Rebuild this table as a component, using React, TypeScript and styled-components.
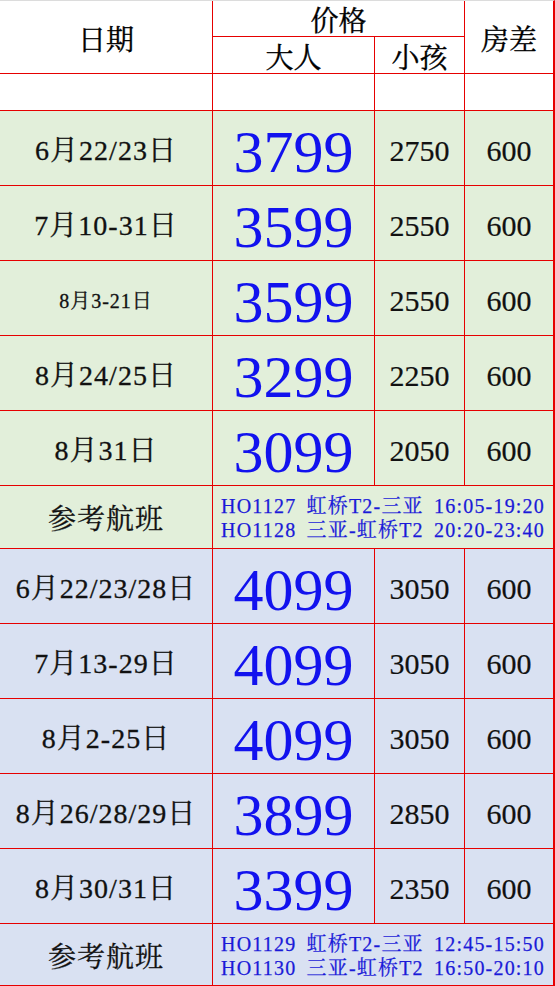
import React from "react";
import styled, { createGlobalStyle } from "styled-components";

const Global = createGlobalStyle`
  html, body { margin: 0; padding: 0; background: #ffffff; }
  body { width: 555px; overflow: hidden; }
`;

const RED = "#e60000";
const GREEN = "#e2efda";
const BLUE = "#d9e1f2";
const SERIF = `"Liberation Serif", "Noto Serif CJK SC", "Noto Sans CJK SC", serif`;

const Sheet = styled.div`
  display: grid;
  width: 555px;
  height: 986px;
  box-sizing: border-box;
  border-top: 1px solid #dcdcdc;
  border-right: 2px solid ${RED};
  border-bottom: 2px solid ${RED};
  grid-template-columns: 213px 162px 90px 88px;
  grid-template-rows: 36px 37px 37px repeat(5, 75px) 63px repeat(5, 75px) 61px;
  font-family: ${SERIF};
  color: #111;
`;

type CellProps = {
  $bg?: string;
  $col?: string;
  $row?: string;
  $noRight?: boolean;
  $noBottom?: boolean;
};

const Cell = styled.div<CellProps>`
  box-sizing: border-box;
  display: flex;
  align-items: center;
  justify-content: center;
  background: ${(p) => p.$bg || "#ffffff"};
  border-right: ${(p) => (p.$noRight ? "none" : `1px solid ${RED}`)};
  border-bottom: ${(p) => (p.$noBottom ? "none" : `1px solid ${RED}`)};
  grid-column: ${(p) => p.$col || "auto"};
  grid-row: ${(p) => p.$row || "auto"};
  line-height: 1;
  white-space: nowrap;
  overflow: hidden;
`;

const HeadText = styled.span<{ $dy?: number }>`
  font-size: 28px;
  color: #000;
  -webkit-text-stroke: 0.35px #000;
  position: relative;
  top: ${(p) => p.$dy || 0}px;
`;

const DateText = styled.span<{ $size?: number }>`
  font-size: ${(p) => p.$size || 28}px;
  letter-spacing: 1px;
  color: #111;
  -webkit-text-stroke: 0.3px #111;
  position: relative;
  top: 3px;
`;

const BigPrice = styled.span`
  font-size: 60px;
  color: #1212ee;
  position: relative;
  top: 4px;
`;

const SmallPrice = styled.span`
  font-size: 30px;
  color: #111;
  -webkit-text-stroke: 0.2px #111;
  position: relative;
  top: 3px;
`;

const FlightCell = styled(Cell)`
  flex-direction: column;
  align-items: flex-start;
  justify-content: center;
  padding-left: 8px;
  padding-top: 3px;
  gap: 3px;
`;

const FlightLine = styled.div`
  font-family: ${SERIF};
  font-size: 20px;
  line-height: 21px;
  letter-spacing: 1.2px;
  word-spacing: 4px;
  color: #1a1ad8;
  -webkit-text-stroke: 0.25px #1a1ad8;
`;

type Row = { date: string; dateSize?: number; adult: string; child: string; room: string };

const greenRows: Row[] = [
  { date: "6月22/23日", adult: "3799", child: "2750", room: "600" },
  { date: "7月10-31日", adult: "3599", child: "2550", room: "600" },
  { date: "8月3-21日", dateSize: 20, adult: "3599", child: "2550", room: "600" },
  { date: "8月24/25日", adult: "3299", child: "2250", room: "600" },
  { date: "8月31日", adult: "3099", child: "2050", room: "600" },
];

const blueRows: Row[] = [
  { date: "6月22/23/28日", adult: "4099", child: "3050", room: "600" },
  { date: "7月13-29日", adult: "4099", child: "3050", room: "600" },
  { date: "8月2-25日", adult: "4099", child: "3050", room: "600" },
  { date: "8月26/28/29日", adult: "3899", child: "2850", room: "600" },
  { date: "8月30/31日", adult: "3399", child: "2350", room: "600" },
];

const DataRows: React.FC<{ rows: Row[]; bg: string }> = ({ rows, bg }) => (
  <>
    {rows.map((r, i) => (
      <React.Fragment key={i}>
        <Cell $bg={bg}>
          <DateText $size={r.dateSize}>{r.date}</DateText>
        </Cell>
        <Cell $bg={bg}>
          <BigPrice>{r.adult}</BigPrice>
        </Cell>
        <Cell $bg={bg}>
          <SmallPrice>{r.child}</SmallPrice>
        </Cell>
        <Cell $bg={bg} $noRight>
          <SmallPrice>{r.room}</SmallPrice>
        </Cell>
      </React.Fragment>
    ))}
  </>
);

const FlightRow: React.FC<{ bg: string; lines: string[]; last?: boolean }> = ({ bg, lines, last }) => (
  <>
    <Cell $bg={bg} $noBottom={last}>
      <DateText>参考航班</DateText>
    </Cell>
    <FlightCell $bg={bg} $col="span 3" $noRight $noBottom={last}>
      {lines.map((l, i) => (
        <FlightLine key={i}>{l}</FlightLine>
      ))}
    </FlightCell>
  </>
);

export default function App() {
  return (
    <>
      <Global />
      <Sheet>
        <Cell $row="span 2">
          <HeadText $dy={4}>日期</HeadText>
        </Cell>
        <Cell $col="span 2">
          <HeadText $dy={3}>价格</HeadText>
        </Cell>
        <Cell $row="span 2" $noRight>
          <HeadText $dy={4}>房差</HeadText>
        </Cell>
        <Cell>
          <HeadText $dy={4}>大人</HeadText>
        </Cell>
        <Cell>
          <HeadText $dy={4}>小孩</HeadText>
        </Cell>

        <Cell />
        <Cell />
        <Cell />
        <Cell $noRight />

        <DataRows rows={greenRows} bg={GREEN} />
        <FlightRow
          bg={GREEN}
          lines={["HO1127 虹桥T2-三亚 16:05-19:20", "HO1128 三亚-虹桥T2 20:20-23:40"]}
        />
        <DataRows rows={blueRows} bg={BLUE} />
        <FlightRow
          bg={BLUE}
          last
          lines={["HO1129 虹桥T2-三亚 12:45-15:50", "HO1130 三亚-虹桥T2 16:50-20:10"]}
        />
      </Sheet>
    </>
  );
}
